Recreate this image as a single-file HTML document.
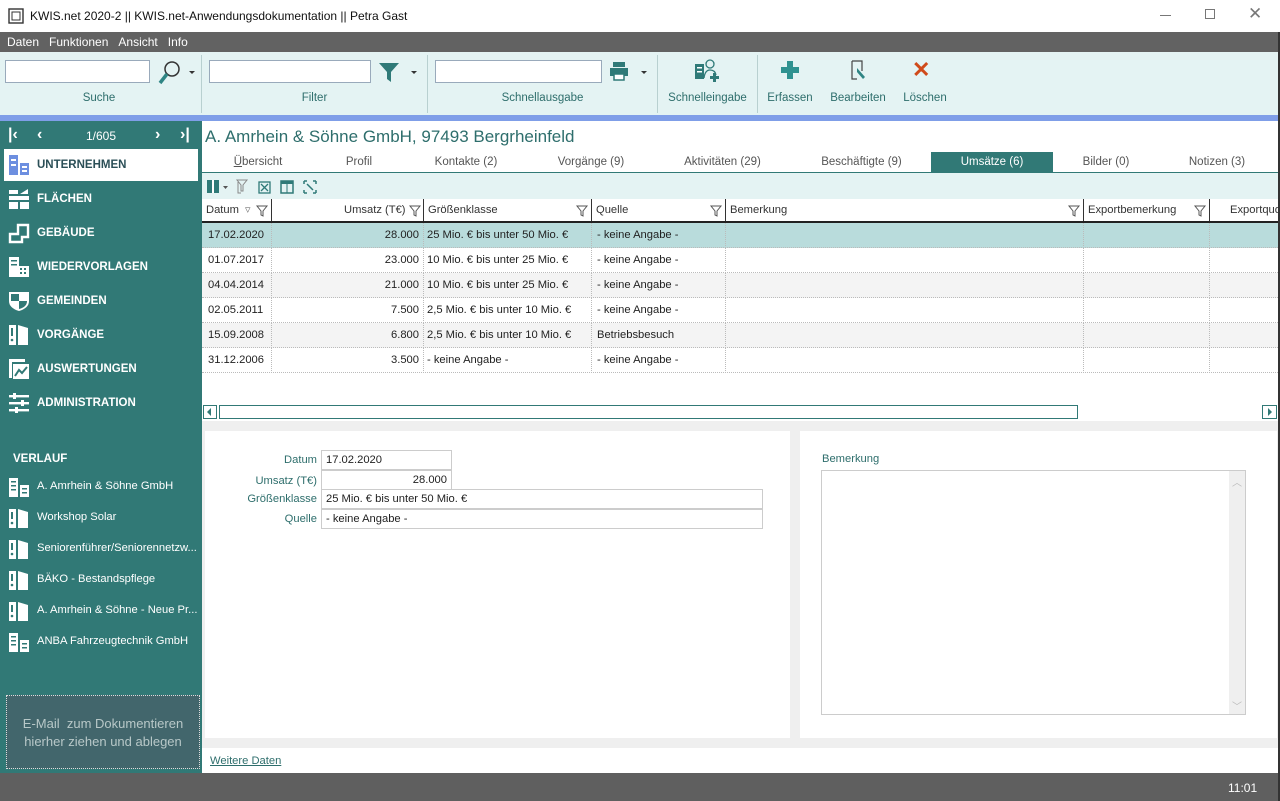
<!DOCTYPE html>
<html><head><meta charset="utf-8">
<style>
*{margin:0;padding:0;box-sizing:border-box}
body{width:1280px;height:801px;overflow:hidden;font-family:"Liberation Sans",sans-serif;font-size:12px;color:#222;background:#fff;position:relative}
.a{position:absolute}
.t{white-space:nowrap}
.menu span{margin-right:10px}
.tb{background:#e4f3f3}
.inp{background:#fff;border:1px solid #9ab;height:23px}
.lbl{color:#2e6e6c;font-size:11.5px;text-align:center}
.sep{width:1px;background:#b8d0d0;top:55px;height:58px}
.nav{color:#fff;font-weight:bold;font-size:11.5px}
.navi{left:8px;width:22px;height:22px}
.hist{color:#fff;font-size:11.2px}
.tab{top:152px;height:20px;line-height:20px;color:#555;font-size:11.5px;text-align:center}
.row{left:202px;width:1076px;height:25px;border-bottom:1px dotted #bbb;font-size:11.2px}
.row div{position:absolute;top:0;line-height:25px;white-space:nowrap}
.cl{border-left:1px dotted #bbb;height:25px}
.hd{font-size:11.2px}
.hd div{position:absolute;white-space:nowrap;color:#333}
.flbl{color:#2e6e6c;text-align:right;width:115px;font-size:11.2px}
.fbox{border:1px solid #ccc;background:#fff;height:20px;line-height:18px;padding:0 4px;font-size:11.2px}
</style></head><body>
<div class="a" style="left:0;top:0;width:1280px;height:32px;background:#fff"></div>
<svg class="a" style="left:8px;top:8px" width="16" height="16"><rect x="1" y="1" width="14" height="14" fill="none" stroke="#333" stroke-width="1.4"/><rect x="4" y="4" width="8" height="8" fill="none" stroke="#333"/></svg>
<div class="a t" style="left:30px;top:9px;font-size:12px;color:#111">KWIS.net 2020-2 || KWIS.net-Anwendungsdokumentation || Petra Gast</div>
<div class="a" style="left:1160px;top:15px;width:11px;height:1px;background:#777"></div>
<div class="a" style="left:1205px;top:9px;width:10px;height:10px;border:1px solid #777"></div>
<div class="a t" style="left:1248px;top:4px;font-size:17px;color:#777">✕</div>
<div class="a menu t" style="left:0;top:32px;width:1280px;height:20px;background:#626262;color:#fff;padding:3px 0 0 7px;font-size:12px"><span>Daten</span><span>Funktionen</span><span>Ansicht</span><span>Info</span></div>
<div class="a tb" style="left:0;top:52px;width:1280px;height:63px"></div>
<div class="a inp" style="left:5px;top:60px;width:145px"></div>
<svg class="a" style="left:156px;top:59px" width="26" height="28"><circle cx="16" cy="10" r="7" fill="none" stroke="#333" stroke-width="1.5"/><line x1="11" y1="15" x2="4" y2="24" stroke="#2f8584" stroke-width="3.5"/></svg>
<div class="a" style="left:189px;top:71px;border:3px solid transparent;border-top:3px solid #333"></div>
<div class="a lbl t" style="left:0;top:92px;width:198px">Suche</div>
<div class="a sep" style="left:201px"></div>
<div class="a inp" style="left:209px;top:60px;width:162px"></div>
<svg class="a" style="left:378px;top:61px" width="22" height="22"><path d="M1 2 H21 L13 11 V21 L9 18 V11 Z" fill="#2f7a78"/></svg>
<div class="a" style="left:411px;top:71px;border:3px solid transparent;border-top:3px solid #333"></div>
<div class="a lbl t" style="left:202px;top:92px;width:225px">Filter</div>
<div class="a sep" style="left:427px"></div>
<div class="a inp" style="left:435px;top:60px;width:167px"></div>
<svg class="a" style="left:609px;top:61px" width="20" height="20"><rect x="4" y="1" width="12" height="5" fill="#2f7a78"/><rect x="1" y="7" width="18" height="8" fill="#2f7a78"/><rect x="5" y="13" width="10" height="6" fill="#fff" stroke="#2f7a78" stroke-width="1.5"/></svg>
<div class="a" style="left:641px;top:71px;border:3px solid transparent;border-top:3px solid #333"></div>
<div class="a lbl t" style="left:428px;top:92px;width:229px">Schnellausgabe</div>
<div class="a sep" style="left:657px"></div>
<svg class="a" style="left:694px;top:58px" width="26" height="24"><rect x="1" y="6" width="9" height="15" fill="#2f7a78"/><rect x="3" y="9" width="5" height="1.5" fill="#fff"/><rect x="3" y="13" width="5" height="1.5" fill="#fff"/><circle cx="16" cy="6" r="4" fill="none" stroke="#2f7a78" stroke-width="1.3"/><path d="M10 20 Q11 12 16 12 Q21 12 22 17" fill="none" stroke="#2f7a78" stroke-width="1.3"/><path d="M19 15 h3 v3 h3 v3 h-3 v3 h-3 v-3 h-3 v-3 h3z" fill="#2f7a78"/></svg>
<div class="a lbl t" style="left:658px;top:92px;width:99px">Schnelleingabe</div>
<div class="a sep" style="left:757px"></div>
<svg class="a" style="left:780px;top:60px" width="20" height="20"><path d="M7 1h6v6h6v6h-6v6H7v-6H1V7h6z" fill="#2f9290"/></svg>
<div class="a lbl t" style="left:760px;top:92px;width:60px">Erfassen</div>
<svg class="a" style="left:850px;top:60px" width="18" height="20"><path d="M2 1h10v10M2 1v18h5" fill="none" stroke="#444" stroke-width="1.2"/><path d="M7 8 L15 17 L13 19 L7 12Z" fill="#2f8584"/></svg>
<div class="a lbl t" style="left:826px;top:92px;width:64px">Bearbeiten</div>
<div class="a t" style="left:912px;top:57px;font-size:22px;color:#d04a1a;font-weight:bold">✕</div>
<div class="a lbl t" style="left:898px;top:92px;width:54px">Löschen</div>
<div class="a" style="left:0;top:115px;width:1280px;height:6px;background:#7f9ee8"></div>
<div class="a" style="left:0;top:121px;width:202px;height:652px;background:#317976"></div>
<div class="a t" style="left:8px;top:126px;color:#fff;font-size:16px;font-weight:bold">|‹</div>
<div class="a t" style="left:37px;top:126px;color:#fff;font-size:16px;font-weight:bold">‹</div>
<div class="a t" style="left:86px;top:129px;color:#fff;font-size:12px">1/605</div>
<div class="a t" style="left:155px;top:126px;color:#fff;font-size:16px;font-weight:bold">›</div>
<div class="a t" style="left:180px;top:126px;color:#fff;font-size:16px;font-weight:bold">›|</div>
<div class="a" style="left:4px;top:149px;width:194px;height:32px;background:#fff"></div>
<svg class="a" style="left:8px;top:154px" width="22" height="22"><rect x="1" y="1" width="9" height="20" fill="#6d8fe0"/><rect x="12" y="9" width="9" height="12" fill="#6d8fe0"/><g fill="#fff"><rect x="3" y="5" width="5" height="2"/><rect x="3" y="10" width="5" height="2"/><rect x="14" y="12" width="5" height="2"/><rect x="14" y="16" width="5" height="2"/></g></svg>
<div class="a nav t" style="left:37px;top:159px;color:#2b4f57">UNTERNEHMEN</div>
<svg class="a navi" style="top:188px" viewBox="0 0 22 22"><g fill="#fff"><rect x="1" y="2" width="9" height="4"/><rect x="1" y="8" width="20" height="4"/><rect x="1" y="14" width="9" height="7"/><rect x="12" y="14" width="9" height="7"/><path d="M12 6 L20 1 V6Z"/></g></svg>
<div class="a nav t" style="left:37px;top:193px">FLÄCHEN</div>
<svg class="a navi" style="top:222px" viewBox="0 0 22 22"><path d="M2 12 h8 v-9 h10 v12 h-6 v5 h-12 z" fill="none" stroke="#fff" stroke-width="2.4"/></svg>
<div class="a nav t" style="left:37px;top:227px">GEBÄUDE</div>
<svg class="a navi" style="top:256px" viewBox="0 0 22 22"><rect x="1" y="1" width="10" height="20" fill="#fff"/><rect x="10" y="10" width="11" height="11" fill="#fff"/><g fill="#317976"><rect x="3" y="4" width="6" height="1.5"/><rect x="3" y="8" width="6" height="1.5"/><rect x="12" y="12" width="2" height="2"/><rect x="16" y="12" width="2" height="2"/><rect x="12" y="16" width="2" height="2"/><rect x="16" y="16" width="2" height="2"/></g></svg>
<div class="a nav t" style="left:37px;top:261px">WIEDERVORLAGEN</div>
<svg class="a navi" style="top:290px" viewBox="0 0 22 22"><path d="M1 2 H21 V11 Q21 18 11 21 Q1 18 1 11 Z" fill="#fff"/><path d="M3 4 H11 V11 H3Z M11 11 H19 Q19 17 11 19Z" fill="#317976"/></svg>
<div class="a nav t" style="left:37px;top:295px">GEMEINDEN</div>
<svg class="a navi" style="top:324px" viewBox="0 0 22 22"><rect x="1" y="1" width="7" height="20" fill="#fff"/><path d="M10 1 L20 4 V21 H10Z" fill="#fff"/><rect x="3" y="4" width="2" height="8" fill="#317976"/><circle cx="4" cy="16" r="1.3" fill="#317976"/></svg>
<div class="a nav t" style="left:37px;top:329px">VORGÄNGE</div>
<svg class="a navi" style="top:358px" viewBox="0 0 22 22"><path d="M1 1h16v3H4v16H1z" fill="#fff"/><rect x="5" y="6" width="16" height="15" fill="#fff"/><path d="M7 18 L11 12 L14 15 L19 9" stroke="#317976" stroke-width="2" fill="none"/></svg>
<div class="a nav t" style="left:37px;top:363px">AUSWERTUNGEN</div>
<svg class="a navi" style="top:392px" viewBox="0 0 22 22"><g fill="#fff"><rect x="1" y="3" width="20" height="2.4"/><rect x="1" y="10" width="20" height="2.4"/><rect x="1" y="17" width="20" height="2.4"/><rect x="5" y="1" width="3" height="6"/><rect x="13" y="8" width="3" height="6"/><rect x="7" y="15" width="3" height="6"/></g></svg>
<div class="a nav t" style="left:37px;top:397px">ADMINISTRATION</div>
<div class="a nav t" style="left:13px;top:453px">VERLAUF</div>
<svg class="a" style="left:8px;top:477px" width="22" height="20"><rect x="1" y="1" width="9" height="19" fill="#fff"/><rect x="12" y="8" width="9" height="12" fill="#fff"/><g fill="#317976"><rect x="3" y="4" width="5" height="1.5"/><rect x="3" y="8" width="5" height="1.5"/><rect x="3" y="12" width="5" height="1.5"/><rect x="14" y="11" width="5" height="1.5"/><rect x="14" y="15" width="5" height="1.5"/></g></svg>
<div class="a hist t" style="left:37px;top:480px">A. Amrhein &amp; Söhne GmbH</div>
<svg class="a" style="left:8px;top:508px" width="22" height="20"><rect x="1" y="1" width="7" height="19" fill="#fff"/><path d="M10 1 L20 4 V20 H10Z" fill="#fff"/><rect x="3" y="4" width="2" height="7" fill="#317976"/><circle cx="4" cy="15" r="1.3" fill="#317976"/></svg>
<div class="a hist t" style="left:37px;top:511px">Workshop Solar</div>
<svg class="a" style="left:8px;top:539px" width="22" height="20"><rect x="1" y="1" width="7" height="19" fill="#fff"/><path d="M10 1 L20 4 V20 H10Z" fill="#fff"/><rect x="3" y="4" width="2" height="7" fill="#317976"/><circle cx="4" cy="15" r="1.3" fill="#317976"/></svg>
<div class="a hist t" style="left:37px;top:542px">Seniorenführer/Seniorennetzw...</div>
<svg class="a" style="left:8px;top:570px" width="22" height="20"><rect x="1" y="1" width="7" height="19" fill="#fff"/><path d="M10 1 L20 4 V20 H10Z" fill="#fff"/><rect x="3" y="4" width="2" height="7" fill="#317976"/><circle cx="4" cy="15" r="1.3" fill="#317976"/></svg>
<div class="a hist t" style="left:37px;top:573px">BÄKO - Bestandspflege</div>
<svg class="a" style="left:8px;top:601px" width="22" height="20"><rect x="1" y="1" width="7" height="19" fill="#fff"/><path d="M10 1 L20 4 V20 H10Z" fill="#fff"/><rect x="3" y="4" width="2" height="7" fill="#317976"/><circle cx="4" cy="15" r="1.3" fill="#317976"/></svg>
<div class="a hist t" style="left:37px;top:604px">A. Amrhein &amp; Söhne - Neue Pr...</div>
<svg class="a" style="left:8px;top:632px" width="22" height="20"><rect x="1" y="1" width="9" height="19" fill="#fff"/><rect x="12" y="8" width="9" height="12" fill="#fff"/><g fill="#317976"><rect x="3" y="4" width="5" height="1.5"/><rect x="3" y="8" width="5" height="1.5"/><rect x="3" y="12" width="5" height="1.5"/><rect x="14" y="11" width="5" height="1.5"/><rect x="14" y="15" width="5" height="1.5"/></g></svg>
<div class="a hist t" style="left:37px;top:635px">ANBA Fahrzeugtechnik GmbH</div>
<div class="a" style="left:6px;top:695px;width:194px;height:74px;background:#42666c;border:1px dotted #ddd"></div>
<div class="a" style="left:6px;top:715px;width:194px;text-align:center;color:#b8c8c8;font-size:13px;line-height:18px">E-Mail&nbsp; zum Dokumentieren<br>hierher ziehen und ablegen</div>
<div class="a t" style="left:205px;top:127px;font-size:17px;color:#2e6e6c">A. Amrhein &amp; Söhne GmbH, 97493 Bergrheinfeld</div>
<div class="a tab t" style="left:218px;width:80px"><u>Ü</u>bersicht</div>
<div class="a tab t" style="left:330px;width:58px">Profil</div>
<div class="a tab t" style="left:425px;width:82px">Kontakte (2)</div>
<div class="a tab t" style="left:545px;width:92px">Vorgänge (9)</div>
<div class="a tab t" style="left:675px;width:95px">Aktivitäten (29)</div>
<div class="a tab t" style="left:810px;width:103px">Beschäftigte (9)</div>
<div class="a tab t" style="left:931px;width:122px;background:#317976;color:#fff">Umsätze (6)</div>
<div class="a tab t" style="left:1070px;width:72px">Bilder (0)</div>
<div class="a tab t" style="left:1180px;width:74px">Notizen (3)</div>
<div class="a tb" style="left:202px;top:172px;width:1076px;height:27px;border-top:1px solid #317976"></div>
<svg class="a" style="left:206px;top:179px" width="120" height="16"><rect x="1" y="1" width="12" height="13" fill="#2f7a78"/><rect x="6" y="1" width="2" height="13" fill="#fff"/><path d="M17 7 h5 l-2.5 3z" fill="#555"/><path d="M31 1 h10 l-4 5 v6 h-2 v-6z M32 3 v11 h3" fill="none" stroke="#888"/><rect x="53" y="3" width="11" height="11" fill="none" stroke="#2f7a78" stroke-width="1.3"/><path d="M55 5 l7 7 M62 5 l-7 7" stroke="#2f7a78" stroke-width="1.3"/><rect x="75" y="2" width="12" height="12" fill="none" stroke="#2f7a78" stroke-width="1.5"/><rect x="75" y="2" width="12" height="3" fill="#2f7a78"/><path d="M81 5 v9" stroke="#2f7a78"/><path d="M98 2h3M98 2v3M110 2h-3M110 2v3M98 14h3M98 14v-3M110 14h-3M110 14v-3M101 5l6 6" stroke="#2f7a78" stroke-width="1.5" fill="none"/></svg>
<div class="a hd" style="left:202px;top:199px;width:1076px;height:24px;border-bottom:2px solid #222;background:#fff">
<div style="left:4px;top:5px">Datum</div><div style="left:43px;top:4px;color:#777">▿</div>
<div style="left:69px;top:0;width:1px;height:22px;background:#333"></div>
<div style="left:142px;top:5px">Umsatz (T€)</div>
<div style="left:221px;top:0;width:1px;height:22px;background:#333"></div>
<div style="left:226px;top:5px">Größenklasse</div>
<div style="left:389px;top:0;width:1px;height:22px;background:#333"></div>
<div style="left:394px;top:5px">Quelle</div>
<div style="left:523px;top:0;width:1px;height:22px;background:#333"></div>
<div style="left:528px;top:5px">Bemerkung</div>
<div style="left:881px;top:0;width:1px;height:22px;background:#333"></div>
<div style="left:886px;top:5px">Exportbemerkung</div>
<div style="left:1007px;top:0;width:1px;height:22px;background:#333"></div>
<div style="left:1028px;top:5px">Exportquo</div>
</div>
<svg class="a" style="left:0;top:204px" width="1280" height="14"><g fill="none" stroke="#555"><path d="M257 2h10l-4 5v5l-2-1v-4z"/><path d="M410 2h10l-4 5v5l-2-1v-4z"/><path d="M577 2h10l-4 5v5l-2-1v-4z"/><path d="M711 2h10l-4 5v5l-2-1v-4z"/><path d="M1069 2h10l-4 5v5l-2-1v-4z"/><path d="M1195 2h10l-4 5v5l-2-1v-4z"/></g></svg>
<div class="a row" style="top:223px;background:#b9dcdc"><div style="left:6px">17.02.2020</div><div class="cl" style="left:69px"></div><div style="left:69px;width:148px;text-align:right">28.000</div><div class="cl" style="left:221px"></div><div style="left:225px">25 Mio. € bis unter 50 Mio. €</div><div class="cl" style="left:389px"></div><div style="left:395px">- keine Angabe -</div><div class="cl" style="left:523px"></div><div class="cl" style="left:881px"></div><div class="cl" style="left:1007px"></div></div>
<div class="a row" style="top:248px"><div style="left:6px">01.07.2017</div><div class="cl" style="left:69px"></div><div style="left:69px;width:148px;text-align:right">23.000</div><div class="cl" style="left:221px"></div><div style="left:225px">10 Mio. € bis unter 25 Mio. €</div><div class="cl" style="left:389px"></div><div style="left:395px">- keine Angabe -</div><div class="cl" style="left:523px"></div><div class="cl" style="left:881px"></div><div class="cl" style="left:1007px"></div></div>
<div class="a row" style="top:273px;background:#f4f4f4"><div style="left:6px">04.04.2014</div><div class="cl" style="left:69px"></div><div style="left:69px;width:148px;text-align:right">21.000</div><div class="cl" style="left:221px"></div><div style="left:225px">10 Mio. € bis unter 25 Mio. €</div><div class="cl" style="left:389px"></div><div style="left:395px">- keine Angabe -</div><div class="cl" style="left:523px"></div><div class="cl" style="left:881px"></div><div class="cl" style="left:1007px"></div></div>
<div class="a row" style="top:298px"><div style="left:6px">02.05.2011</div><div class="cl" style="left:69px"></div><div style="left:69px;width:148px;text-align:right">7.500</div><div class="cl" style="left:221px"></div><div style="left:225px">2,5 Mio. € bis unter 10 Mio. €</div><div class="cl" style="left:389px"></div><div style="left:395px">- keine Angabe -</div><div class="cl" style="left:523px"></div><div class="cl" style="left:881px"></div><div class="cl" style="left:1007px"></div></div>
<div class="a row" style="top:323px;background:#f4f4f4"><div style="left:6px">15.09.2008</div><div class="cl" style="left:69px"></div><div style="left:69px;width:148px;text-align:right">6.800</div><div class="cl" style="left:221px"></div><div style="left:225px">2,5 Mio. € bis unter 10 Mio. €</div><div class="cl" style="left:389px"></div><div style="left:395px">Betriebsbesuch</div><div class="cl" style="left:523px"></div><div class="cl" style="left:881px"></div><div class="cl" style="left:1007px"></div></div>
<div class="a row" style="top:348px"><div style="left:6px">31.12.2006</div><div class="cl" style="left:69px"></div><div style="left:69px;width:148px;text-align:right">3.500</div><div class="cl" style="left:221px"></div><div style="left:225px">- keine Angabe -</div><div class="cl" style="left:389px"></div><div style="left:395px">- keine Angabe -</div><div class="cl" style="left:523px"></div><div class="cl" style="left:881px"></div><div class="cl" style="left:1007px"></div></div>
<div class="a" style="left:203px;top:405px;width:14px;height:14px;border:1px solid #317976;background:#fff"></div>
<div class="a" style="left:207px;top:408px;border:4px solid transparent;border-right:4px solid #317976;border-left:0"></div>
<div class="a" style="left:219px;top:405px;width:859px;height:14px;border:1px solid #317976;background:#fff"></div>
<div class="a" style="left:1262px;top:405px;width:15px;height:14px;border:1px solid #317976;background:#fff"></div>
<div class="a" style="left:1268px;top:408px;border:4px solid transparent;border-left:4px solid #317976;border-right:0"></div>
<div class="a" style="left:202px;top:421px;width:1076px;height:327px;background:#efefef"></div>
<div class="a" style="left:205px;top:431px;width:585px;height:307px;background:#fff"></div>
<div class="a" style="left:800px;top:431px;width:477px;height:307px;background:#fff"></div>
<div class="a flbl t" style="left:202px;top:454px">Datum</div>
<div class="a fbox t" style="left:321px;top:450px;width:131px">17.02.2020</div>
<div class="a flbl t" style="left:202px;top:475px">Umsatz (T€)</div>
<div class="a fbox t" style="left:321px;top:470px;width:131px;text-align:right">28.000</div>
<div class="a flbl t" style="left:202px;top:493px">Größenklasse</div>
<div class="a fbox t" style="left:321px;top:489px;width:442px">25 Mio. € bis unter 50 Mio. €</div>
<div class="a flbl t" style="left:202px;top:513px">Quelle</div>
<div class="a fbox t" style="left:321px;top:509px;width:442px">- keine Angabe -</div>
<div class="a t" style="left:822px;top:453px;color:#2e6e6c;font-size:11.2px">Bemerkung</div>
<div class="a" style="left:821px;top:470px;width:425px;height:245px;border:1px solid #ccc;background:#fff"></div>
<div class="a" style="left:1229px;top:471px;width:16px;height:243px;background:#efefef"></div>
<div class="a t" style="left:1232px;top:474px;color:#bbb;font-size:10px">︿</div>
<div class="a t" style="left:1232px;top:698px;color:#bbb;font-size:10px">﹀</div>
<div class="a t" style="left:210px;top:755px;color:#2e6e6c;text-decoration:underline;font-size:11.2px">Weitere Daten</div>
<div class="a" style="left:0;top:773px;width:1280px;height:28px;background:#5f5f5f"></div>
<div class="a t" style="left:1228px;top:781px;color:#fff;font-size:12px">11:01</div>
<div class="a" style="left:1278px;top:32px;width:2px;height:769px;background:#333"></div>
</body></html>
